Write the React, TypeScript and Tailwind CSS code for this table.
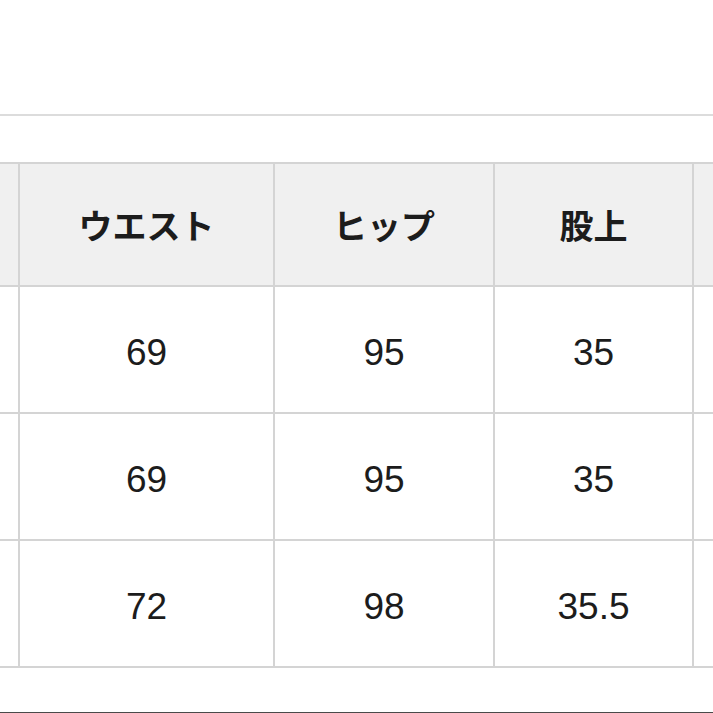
import React from 'react';

const headers = ['', 'ウエスト', 'ヒップ', '股上', ''];

const rows = [
  ['', '69', '95', '35', ''],
  ['', '69', '95', '35', ''],
  ['', '72', '98', '35.5', ''],
];

// widths include the right border (border-box)
const colWidths = ['w-[20px]', 'w-[255px]', 'w-[220px]', 'w-[199px]', 'flex-1'];

const Cell = ({ text, idx, header }: { text: string; idx: number; header?: boolean }) => {
  const last = idx === colWidths.length - 1;
  return (
    <div
      className={`${colWidths[idx]} ${last ? '' : 'border-r-2 border-[#d4d4d4]'} ${
        header ? 'bg-[#f0f0f0]' : 'bg-white'
      } flex items-center justify-center shrink-0`}
    >
      {header ? (
        <span className="text-[34px] font-bold text-[#1c1c1c] [font-family:'Noto_Sans_CJK_JP',sans-serif]">
          {text}
        </span>
      ) : (
        <span className="pt-[7px] text-[37px] text-[#1c1c1c] [font-family:'Liberation_Sans',Arial,sans-serif]">
          {text}
        </span>
      )}
    </div>
  );
};

export default function App() {
  return (
    <div className="w-[713px] h-[713px] bg-white overflow-hidden flex flex-col">
      <div className="h-[114px]" />
      <div className="h-[2px] bg-[#dcdcdc]" />
      <div className="h-[46px]" />

      <div className="border-t-2 border-[#d4d4d4]">
        <div className="flex h-[123px] border-b-2 border-[#d4d4d4]">
          {headers.map((h, i) => (
            <Cell key={i} text={h} idx={i} header />
          ))}
        </div>
        {rows.map((r, ri) => (
          <div key={ri} className="flex h-[127px] border-b-2 border-[#d4d4d4]">
            {r.map((c, i) => (
              <Cell key={i} text={c} idx={i} />
            ))}
          </div>
        ))}
      </div>

      <div className="flex-1" />
      <div className="h-[1px] bg-[#4a4a4a]" />
    </div>
  );
}
